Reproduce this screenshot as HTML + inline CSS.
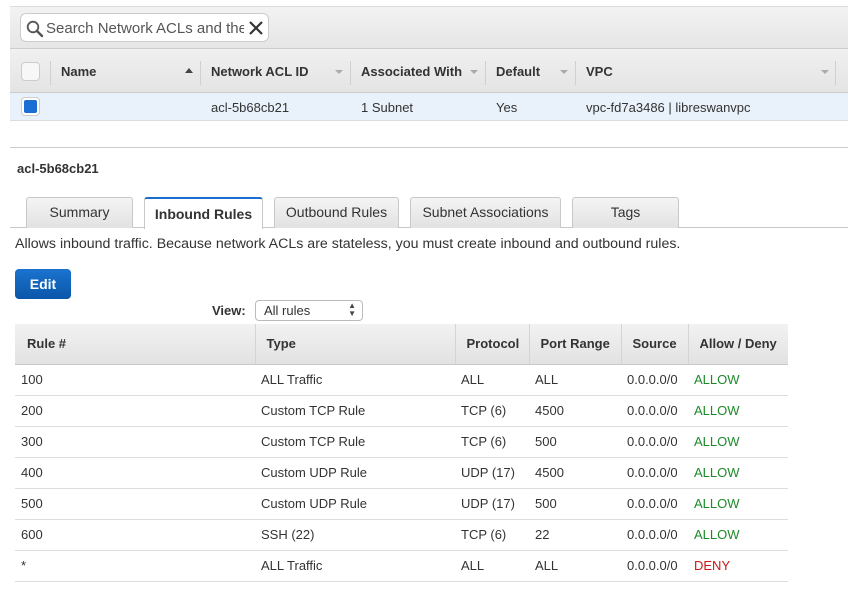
<!DOCTYPE html>
<html><head><meta charset="utf-8"><style>
*{margin:0;padding:0;box-sizing:border-box}
body{width:848px;height:606px;background:#fff;font-family:"Liberation Sans",Arial,sans-serif;font-size:13px;color:#333;position:relative;overflow:hidden}
.abs{position:absolute}
.bold{font-weight:bold}
.topband{left:10px;top:6px;width:838px;height:43px;background:linear-gradient(#f2f2f2,#e6e6e6);border-top:1px solid #ddd;border-bottom:1px solid #ccc}
.search{left:20px;top:13px;width:249px;height:29px;background:#fff;border:1px solid #ccc;border-radius:6px}
.hdr{left:10px;top:49px;width:838px;height:44px;background:linear-gradient(#f0f0f0,#e4e4e4);border-bottom:1px solid #ccc}
.sel{left:10px;top:93px;width:838px;height:28px;background:#e9f1fb;border-bottom:1px solid #ddd}
.sep{width:1px;height:24px;background:#d0d0d0;top:61px}
.arr{width:0;height:0;border-left:4px solid transparent;border-right:4px solid transparent;border-top:4px solid #aaa;top:70px}
.cb{width:19px;height:19px;border:1px solid #ccc;border-radius:4px;background:#f7f7f7}
.tab{top:197px;height:31px;border:1px solid #c8c8c8;border-bottom:none;border-radius:3px 3px 0 0;background:linear-gradient(#f4f4f4,#e2e2e2);text-align:center;line-height:29px;font-size:14px}
table{position:absolute;left:15px;top:324px;width:773px;border-collapse:collapse}
th{height:40px;background:linear-gradient(#f2f2f2,#e2e2e2);text-align:left;font-weight:bold;border-left:1px solid #d4d4d4;border-bottom:1px solid #c8c8c8;padding-left:11px}
th:first-child{border-left:none}
td{height:31px;border-bottom:1px solid #ddd;padding-left:6px}
.g{color:#1d8a2a}.r{color:#c81818}
</style></head><body>
<div class="abs topband"></div>
<div class="abs search">
<svg class="abs" style="left:5px;top:6px" width="18" height="18" viewBox="0 0 18 18"><circle cx="7" cy="7" r="5.3" fill="none" stroke="#555" stroke-width="1.8"/><path d="M11 11l5 5" stroke="#555" stroke-width="2.4" stroke-linecap="round"/></svg>
<div class="abs" style="left:25px;top:6px;font-size:15px;color:#555;width:198px;overflow:hidden;white-space:nowrap">Search Network ACLs and their</div>
<svg class="abs" style="left:228px;top:7px" width="14" height="14"><path d="M1 1l12 12M13 1L1 13" stroke="#333" stroke-width="2.2"/></svg>
</div>
<div class="abs hdr"></div>
<div class="abs cb" style="left:21px;top:62px"></div>
<div class="abs sep" style="left:50px"></div>
<div class="abs bold" style="left:61px;top:64px">Name</div>
<div class="abs" style="left:185px;top:68px;width:0;height:0;border-left:4px solid transparent;border-right:4px solid transparent;border-bottom:5px solid #444"></div>
<div class="abs sep" style="left:200px"></div>
<div class="abs bold" style="left:211px;top:64px">Network ACL ID</div>
<div class="abs arr" style="left:335px"></div>
<div class="abs sep" style="left:350px"></div>
<div class="abs bold" style="left:361px;top:64px">Associated With</div>
<div class="abs arr" style="left:470px"></div>
<div class="abs sep" style="left:485px"></div>
<div class="abs bold" style="left:496px;top:64px">Default</div>
<div class="abs arr" style="left:560px"></div>
<div class="abs sep" style="left:575px"></div>
<div class="abs bold" style="left:586px;top:64px">VPC</div>
<div class="abs arr" style="left:821px"></div>
<div class="abs sep" style="left:835px"></div>
<div class="abs sel"></div>
<div class="abs" style="left:21px;top:97px;width:19px;height:19px;border:1px solid #ccc;border-radius:4px;background:#fff;padding:2px"><div style="width:13px;height:13px;border-radius:2px;background:#1a6ed3"></div></div>
<div class="abs" style="left:211px;top:100px">acl-5b68cb21</div>
<div class="abs" style="left:361px;top:100px">1 Subnet</div>
<div class="abs" style="left:496px;top:100px">Yes</div>
<div class="abs" style="left:586px;top:100px">vpc-fd7a3486 | libreswanvpc</div>
<div class="abs" style="left:10px;top:147px;width:838px;height:1px;background:#ccc"></div>
<div class="abs bold" style="left:17px;top:161px">acl-5b68cb21</div>
<div class="abs" style="left:10px;top:227px;width:838px;height:1px;background:#c8c8c8"></div>
<div class="abs tab" style="left:26px;width:107px">Summary</div>
<div class="abs tab bold" style="left:144px;width:119px;height:32px;background:#fff;border-top:2px solid #1a6ed3;line-height:31px">Inbound Rules</div>
<div class="abs tab" style="left:274px;width:125px">Outbound Rules</div>
<div class="abs tab" style="left:410px;width:151px">Subnet Associations</div>
<div class="abs tab" style="left:572px;width:107px">Tags</div>
<div class="abs" style="left:15px;top:236px;font-size:14.2px;white-space:nowrap">Allows inbound traffic. Because network ACLs are stateless, you must create inbound and outbound rules.</div>
<div class="abs bold" style="left:15px;top:269px;width:56px;height:30px;background:linear-gradient(#1b73cf,#0a56a9);border-radius:4px;color:#fff;text-align:center;line-height:30px;font-size:14px">Edit</div>
<div class="abs bold" style="left:212px;top:303px">View:</div>
<div class="abs" style="left:255px;top:300px;width:108px;height:21px;border:1px solid #bbb;border-radius:4px;background:#fff;padding:2px 0 0 8px">All rules<span class="abs" style="right:6px;top:1px;font-size:8px;line-height:8px;color:#444">▲<br>▼</span></div>
<table>
<tr><th style="width:240px;padding-left:12px">Rule #</th><th style="width:200px">Type</th><th style="width:74px">Protocol</th><th style="width:92px">Port Range</th><th style="width:67px">Source</th><th>Allow / Deny</th></tr>
<tr><td>100</td><td>ALL Traffic</td><td>ALL</td><td>ALL</td><td>0.0.0.0/0</td><td class="g">ALLOW</td></tr>
<tr><td>200</td><td>Custom TCP Rule</td><td>TCP (6)</td><td>4500</td><td>0.0.0.0/0</td><td class="g">ALLOW</td></tr>
<tr><td>300</td><td>Custom TCP Rule</td><td>TCP (6)</td><td>500</td><td>0.0.0.0/0</td><td class="g">ALLOW</td></tr>
<tr><td>400</td><td>Custom UDP Rule</td><td>UDP (17)</td><td>4500</td><td>0.0.0.0/0</td><td class="g">ALLOW</td></tr>
<tr><td>500</td><td>Custom UDP Rule</td><td>UDP (17)</td><td>500</td><td>0.0.0.0/0</td><td class="g">ALLOW</td></tr>
<tr><td>600</td><td>SSH (22)</td><td>TCP (6)</td><td>22</td><td>0.0.0.0/0</td><td class="g">ALLOW</td></tr>
<tr><td>*</td><td>ALL Traffic</td><td>ALL</td><td>ALL</td><td>0.0.0.0/0</td><td class="r">DENY</td></tr>
</table>
</body></html>
